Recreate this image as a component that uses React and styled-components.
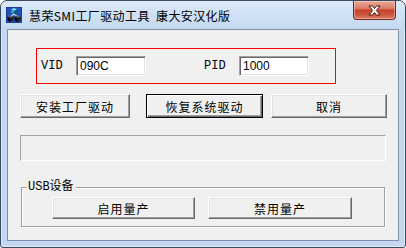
import React from "react";
import styled, { createGlobalStyle } from "styled-components";

// 전체 페이지 기본값
const GlobalStyle = createGlobalStyle`
  html, body {
    margin: 0;
    padding: 0;
    background: #ffffff;
  }
  #root {
    width: 406px;
    height: 248px;
  }
`;

// Window: Win7 basic 창 프레임
const Window = styled.div`
  width: 406px;
  height: 248px;
  box-sizing: border-box;
  border: 1px solid #3a4b60;
  border-radius: 7px 7px 3px 3px;
  background: #c4d9f1;
  box-shadow: inset 1px 1px 0 #dde9f7, inset -1px -1px 0 #dde9f7;
  display: flex;
  flex-direction: column;
  overflow: hidden;
  font-family: "Noto Sans CJK SC", sans-serif;
`;

const TitleBar = styled.div`
  height: 28px;
  flex: none;
  display: flex;
  align-items: center;
  padding-left: 5px;
  background: linear-gradient(to bottom, #dde9f7 0%, #d0e2f5 45%, #c4d9f1 100%);
  border-radius: 6px 6px 0 0;
`;

const TitleText = styled.span`
  margin-left: 7px;
  font-size: 12px;
  letter-spacing: 0.4px;
  color: #000;
  white-space: pre;
`;

const CloseButton = styled.div`
  align-self: flex-start;
  margin-left: auto;
  margin-right: 9px;
  width: 43px;
  height: 19px;
  box-sizing: border-box;
  border: 1px solid #6e2a20;
  border-top: none;
  border-radius: 0 0 4px 4px;
  background: linear-gradient(to bottom, #e9a99a 0%, #dc7f6c 40%, #c6412c 52%, #cf5a42 80%, #e0826a 100%);
  box-shadow: inset 0 0 0 1px rgba(255, 220, 210, 0.45);
  display: flex;
  align-items: center;
  justify-content: center;
`;

// Client: 대화상자 본문
const Client = styled.div`
  flex: 1;
  margin: 0 6px 6px;
  border: 1px solid #7f91a6;
  background: #f0f0f0;
  padding: 18px 0 0 12px;
  display: flex;
  flex-direction: column;
  align-items: flex-start;
`;

const IdBox = styled.div`
  margin-left: 16px;
  width: 300px;
  height: 36px;
  box-sizing: border-box;
  border: 1px solid #ff0000;
  padding-left: 4px;
  display: flex;
  align-items: center;
`;

const IdLabel = styled.span`
  width: 35px;
  margin-left: ${(p) => p.$gap || 0}px;
  font-family: "Liberation Mono", monospace;
  font-size: 12px;
  color: #000;
`;

const TextField = styled.div`
  width: 70px;
  height: 20px;
  box-sizing: border-box;
  border: 1px solid;
  border-color: #a0a0a0 #ffffff #ffffff #a0a0a0;
  box-shadow: inset 1px 1px 0 #696969, inset -1px -1px 0 #e3e3e3;
  background: #ffffff;
  padding-left: 3px;
  display: flex;
  align-items: center;
  font-family: "Liberation Sans", Arial, sans-serif;
  font-size: 12px;
  color: #000;
`;

const ButtonRow = styled.div`
  display: flex;
  margin-top: 10px;
`;

const Button = styled.div`
  width: ${(p) => p.$w}px;
  height: ${(p) => p.$h || 24}px;
  margin-left: ${(p) => p.$ml || 0}px;
  box-sizing: border-box;
  border: 1px solid;
  border-color: ${(p) => (p.$default ? "#000" : "#ffffff #696969 #696969 #ffffff")};
  box-shadow: ${(p) =>
    p.$default
      ? "inset 1px 1px 0 #ffffff, inset -1px -1px 0 #696969, inset -2px -2px 0 #a0a0a0"
      : "inset -1px -1px 0 #a0a0a0, inset 1px 1px 0 #e3e3e3"};
  background: #f0f0f0;
  display: flex;
  align-items: center;
  justify-content: center;
  font-family: "Noto Sans CJK SC", sans-serif;
  font-size: 12px;
  letter-spacing: 1px;
  color: #000;
`;

const StatusBox = styled.div`
  margin-top: 17px;
  width: 366px;
  height: 26px;
  box-sizing: border-box;
  border: 1px solid;
  border-color: #a0a0a0 #ffffff #ffffff #a0a0a0;
`;

const Group = styled.div`
  position: relative;
  margin-top: 26px;
  margin-left: 1px;
  width: 364px;
  height: 40px;
  box-sizing: border-box;
  border: 1px solid #a0a0a0;
  box-shadow: inset 1px 1px 0 #ffffff, 1px 1px 0 #ffffff;
  padding: 9px 0 0 30px;
  display: flex;
`;

const GroupLabel = styled.span`
  position: absolute;
  top: -8px;
  left: 5px;
  padding: 0 2px 0 1px;
  background: #f0f0f0;
  font-family: "Liberation Mono", "Noto Sans CJK SC", monospace;
  font-size: 12px;
  line-height: 14px;
  color: #000;
`;

function AppIcon() {
  return (
    <svg width="16" height="16" viewBox="0 0 16 16">
      <rect x="0" y="0" width="16" height="16" fill="#1a3c9a" />
      <rect x="1" y="1" width="14" height="14" fill="#2250b8" />
      <polygon points="8,1 11,2.5 8,4 5,2.5" fill="#7fe0f0" />
      <polygon points="5,2.5 8,4 8,7.5 5,6" fill="#20a0c0" />
      <polygon points="11,2.5 8,4 8,7.5 11,6" fill="#0c5a80" />
      <line x1="8" y1="7.5" x2="4.5" y2="9" stroke="#ffffff" strokeWidth="1" />
      <line x1="8" y1="7.5" x2="11.5" y2="9" stroke="#ffffff" strokeWidth="1" />
      <polygon points="4.5,8 7.5,9.5 4.5,11 1.5,9.5" fill="#5a6070" />
      <polygon points="1.5,9.5 4.5,11 4.5,15 1.5,13.5" fill="#000" />
      <polygon points="7.5,9.5 4.5,11 4.5,15 7.5,13.5" fill="#202020" />
      <polygon points="11.5,8 14.5,9.5 11.5,11 8.5,9.5" fill="#5a6070" />
      <polygon points="8.5,9.5 11.5,11 11.5,15 8.5,13.5" fill="#000" />
      <polygon points="14.5,9.5 11.5,11 11.5,15 14.5,13.5" fill="#202020" />
    </svg>
  );
}

function CloseGlyph() {
  return (
    <svg width="13" height="11" viewBox="0 0 13 11">
      <path
        d="M1 1 H4.5 L6.5 3.5 L8.5 1 H12 L8.3 5.5 L12 10 H8.5 L6.5 7.5 L4.5 10 H1 L4.7 5.5 Z"
        fill="#ffffff"
        stroke="#4a1a14"
        strokeWidth="1"
        strokeLinejoin="round"
      />
    </svg>
  );
}

export default function App() {
  return (
    <>
      <GlobalStyle />
      <Window>
        <TitleBar>
          <AppIcon />
          <TitleText>慧荣SMI工厂驱动工具  康大安汉化版</TitleText>
          <CloseButton>
            <CloseGlyph />
          </CloseButton>
        </TitleBar>

        <Client>
          <IdBox>
            <IdLabel>VID</IdLabel>
            <TextField>090C</TextField>
            <IdLabel $gap={58}>PID</IdLabel>
            <TextField>1000</TextField>
          </IdBox>

          <ButtonRow>
            <Button $w={110}>安装工厂驱动</Button>
            <Button $w={117} $ml={16} $default>
              恢复系统驱动
            </Button>
            <Button $w={116} $ml={8}>
              取消
            </Button>
          </ButtonRow>

          <StatusBox />

          <Group>
            <GroupLabel>USB设备</GroupLabel>
            <Button $w={143} $h={22}>
              启用量产
            </Button>
            <Button $w={144} $h={22} $ml={13}>
              禁用量产
            </Button>
          </Group>
        </Client>
      </Window>
    </>
  );
}
